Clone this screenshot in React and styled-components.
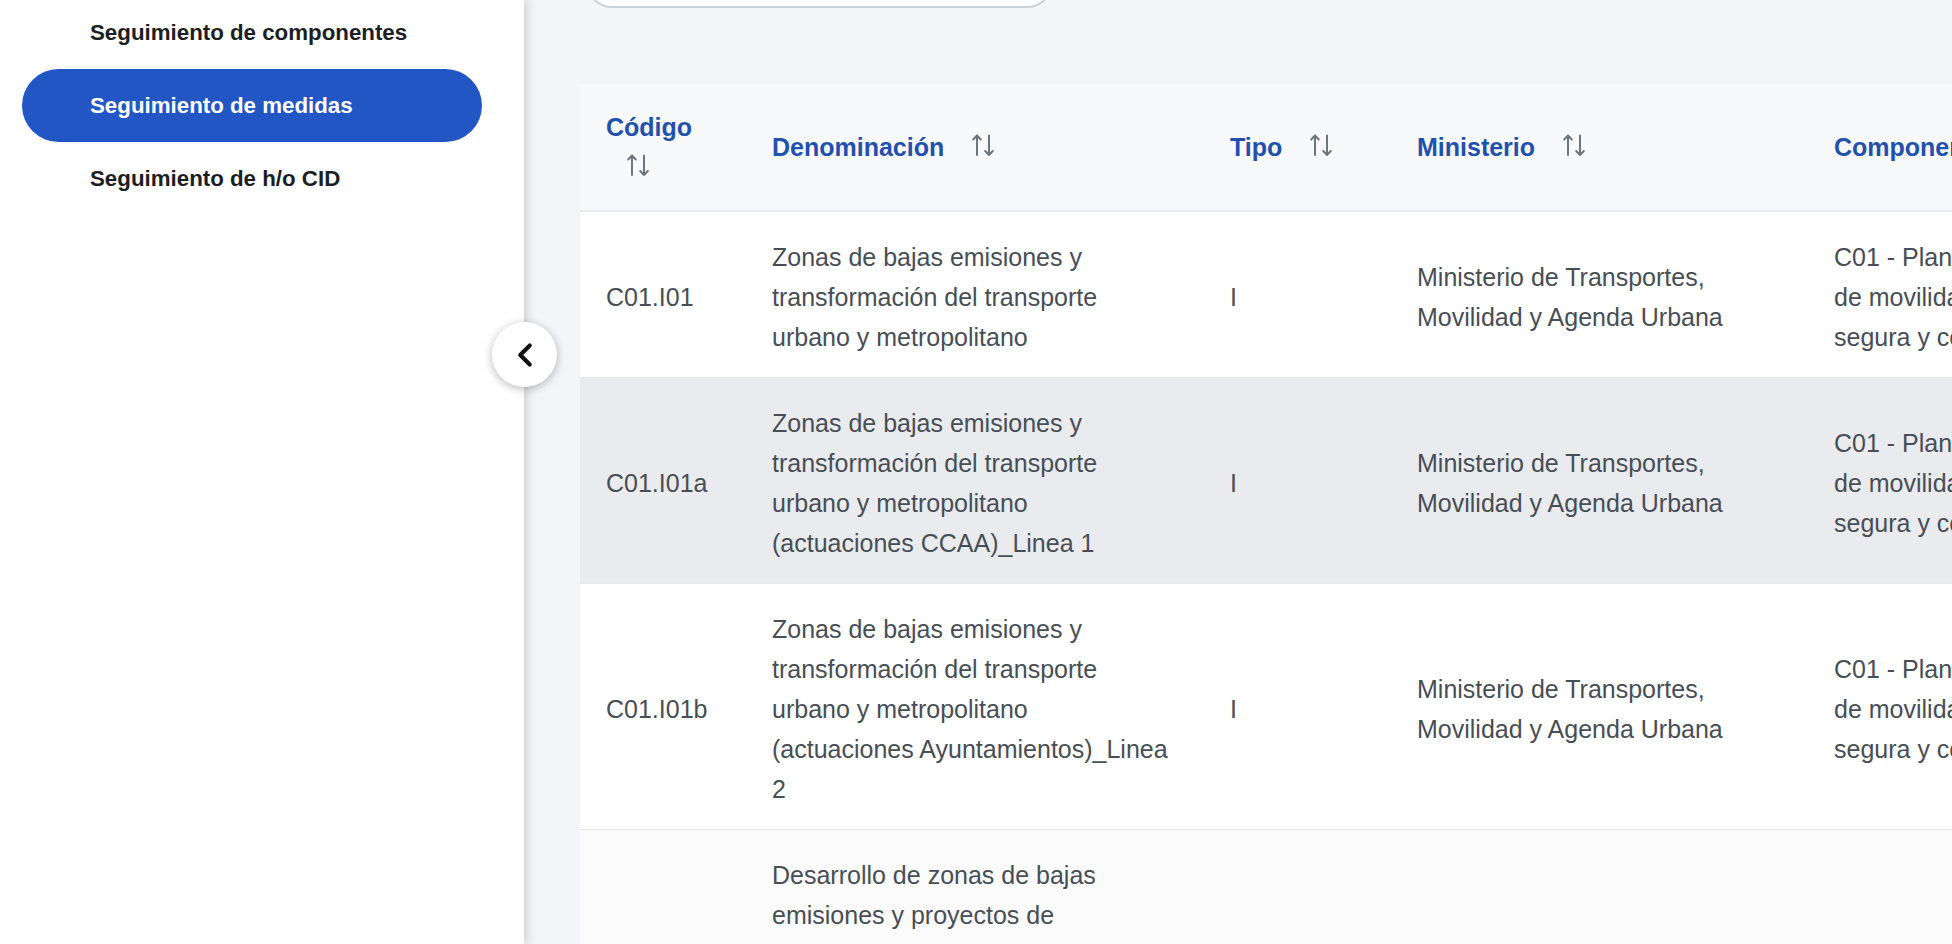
import React from 'react';
import styled, { createGlobalStyle } from 'styled-components';
import { ChevronLeft } from 'lucide-react';

const GlobalStyle = createGlobalStyle`
  html, body {
    margin: 0;
    padding: 0;
    height: 100%;
    overflow: hidden;
  }
  body {
    font-family: "Liberation Sans", Arial, sans-serif;
    background: #f4f5f8;
  }
  #root {
    height: 100%;
  }
`;

const COMPONENTE = 'C01 - Plan de choque\nde movilidad sostenible,\nsegura y conectada';
const MINISTERIO = 'Ministerio de Transportes, Movilidad y Agenda Urbana';

const medidas = [
  {
    codigo: 'C01.I01',
    denominacion: 'Zonas de bajas emisiones y transformación del transporte urbano y metropolitano',
    tipo: 'I',
  },
  {
    codigo: 'C01.I01a',
    denominacion:
      'Zonas de bajas emisiones y transformación del transporte urbano y metropolitano (actuaciones CCAA)_Linea 1',
    tipo: 'I',
    tone: 'hover',
  },
  {
    codigo: 'C01.I01b',
    denominacion:
      'Zonas de bajas emisiones y transformación del transporte urbano y metropolitano (actuaciones Ayuntamientos)_Linea 2',
    tipo: 'I',
  },
  {
    codigo: 'C01.I01c',
    denominacion:
      'Desarrollo de zonas de bajas emisiones y proyectos de transformación de la movilidad del transporte urbano y metropolitano en municipios de más de 50.000 habitantes, capitales de provincia y municipios de más de 20.000 habitantes con problemas de calidad del aire, en el marco de las actuaciones de las entidades locales',
    tipo: 'I',
    tone: 'striped',
  },
];

const SortIcon = () => (
  <svg
    width="25"
    height="24"
    viewBox="0 0 25 24"
    fill="none"
    stroke="#6c757d"
    strokeWidth="2"
    strokeLinecap="round"
    strokeLinejoin="round"
  >
    <path d="M6 22V2.5M2.2 6.5 6 2.5l3.8 4" />
    <path d="M18 2.5V22M14.2 18l3.8 4 3.8-4" />
  </svg>
);

const App = () => {
  return (
    <>
      <GlobalStyle />
      <Layout>
        <Sidebar>
          <Menu>
            <MenuItem href="#">Seguimiento de componentes</MenuItem>
            <MenuItem href="#" $active>
              Seguimiento de medidas
            </MenuItem>
            <MenuItem href="#">Seguimiento de h/o CID</MenuItem>
          </Menu>
          <CollapseButton aria-label="Ocultar menú">
            <ChevronLeft size={38} strokeWidth={2.6} color="#111" />
          </CollapseButton>
        </Sidebar>

        <Main>
          <Search />
          <TableCard>
            <Table>
              <colgroup>
                <col style={{ width: 166 }} />
                <col style={{ width: 458 }} />
                <col style={{ width: 187 }} />
                <col style={{ width: 417 }} />
                <col style={{ width: 620 }} />
              </colgroup>
              <thead>
                <tr>
                  <HeadCell>
                    Código <SortMark><SortIcon /></SortMark>
                  </HeadCell>
                  <HeadCell>
                    Denominación <SortMark><SortIcon /></SortMark>
                  </HeadCell>
                  <HeadCell>
                    Tipo <SortMark><SortIcon /></SortMark>
                  </HeadCell>
                  <HeadCell>
                    Ministerio <SortMark><SortIcon /></SortMark>
                  </HeadCell>
                  <HeadCell>
                    Componente <SortMark><SortIcon /></SortMark>
                  </HeadCell>
                </tr>
              </thead>
              <tbody>
                {medidas.map((m) => (
                  <Row key={m.codigo} $tone={m.tone}>
                    <Cell>{m.codigo}</Cell>
                    <Cell $right={32}>{m.denominacion}</Cell>
                    <Cell>{m.tipo}</Cell>
                    <Cell>{MINISTERIO}</Cell>
                    <Cell $lines>{COMPONENTE}</Cell>
                  </Row>
                ))}
              </tbody>
            </Table>
          </TableCard>
        </Main>
      </Layout>
    </>
  );
};

export default App;

const Layout = styled.div`
  display: flex;
  height: 100vh;
  overflow: hidden;
`;

const Sidebar = styled.aside`
  position: relative;
  flex: 0 0 524px;
  background: #fff;
  box-shadow: 3px 0 9px rgba(70, 45, 55, 0.2);
  z-index: 2;
`;

const Menu = styled.nav`
  display: flex;
  flex-direction: column;
  margin-top: -4px;
  padding: 0 42px 0 22px;
`;

const MenuItem = styled.a`
  display: flex;
  align-items: center;
  height: 73px;
  padding-left: 68px;
  border-radius: 37px;
  font-size: 22.3px;
  font-weight: 700;
  text-decoration: none;
  color: ${(p) => (p.$active ? '#ffffff' : '#1c1e23')};
  background: ${(p) => (p.$active ? '#2256c5' : 'transparent')};
`;

const CollapseButton = styled.button`
  position: absolute;
  top: 322px;
  right: -33px;
  width: 65px;
  height: 65px;
  padding: 0;
  border: none;
  border-radius: 50%;
  background: #fff;
  box-shadow: 0 2px 10px rgba(0, 0, 0, 0.28);
  display: flex;
  align-items: center;
  justify-content: center;
  cursor: pointer;
`;

const Main = styled.main`
  flex: 1;
  min-width: 0;
  padding-left: 56px;
  background: #f4f5f8;
  overflow: hidden;
`;

const Search = styled.div`
  width: 463px;
  height: 50px;
  margin: -46px 0 76px 6px;
  border: 2px solid #cdd1d7;
  border-radius: 26px;
  background: #fff;
`;

const TableCard = styled.div`
  width: 1848px;
  background: #fff;
`;

const Table = styled.table`
  width: 1848px;
  table-layout: fixed;
  border-collapse: collapse;
  font-size: 25px;
  line-height: 40px;
  color: #484e55;
`;

const HeadCell = styled.th`
  padding: 23px 26px;
  background: #f8f9fa;
  border-bottom: 2px solid #e9ebee;
  color: #2151ad;
  font-weight: 700;
  text-align: left;
  vertical-align: middle;
  white-space: normal;
`;

const SortMark = styled.span`
  display: inline-block;
  margin-left: 20px;
  vertical-align: middle;
  line-height: 0;
  position: relative;
  top: -4px;
`;

const Row = styled.tr`
  background: ${(p) =>
    p.$tone === 'hover' ? '#e9ebef' : p.$tone === 'striped' ? '#fbfbfc' : '#ffffff'};
`;

const Cell = styled.td`
  padding: 25px ${(p) => p.$right || 26}px 20px 26px;
  border-bottom: 1px solid #e6e8eb;
  vertical-align: middle;
  white-space: ${(p) => (p.$lines ? 'pre-line' : 'normal')};
  overflow: hidden;
`;
